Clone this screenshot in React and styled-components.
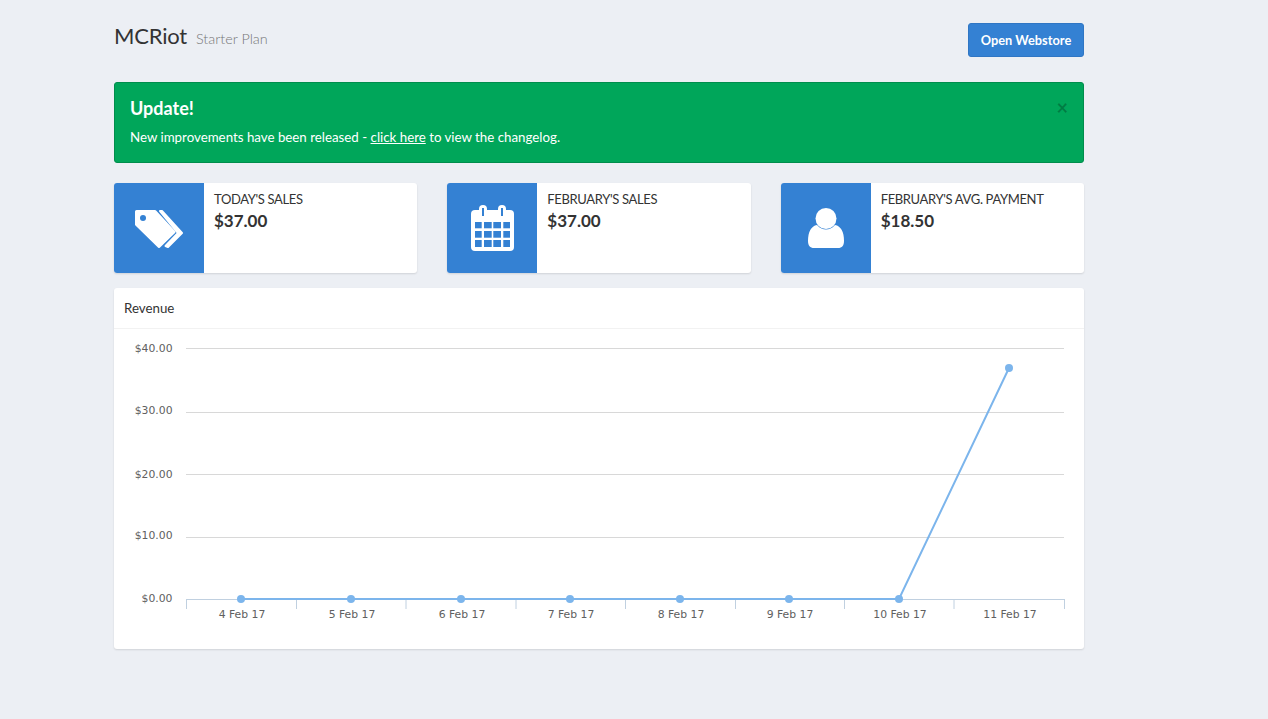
import React from 'react';
import styled, { createGlobalStyle } from 'styled-components';

const GlobalStyle = createGlobalStyle`
  html, body { margin: 0; padding: 0; background: #ECEFF4; }
  body { font-family: "Lato", "Liberation Sans", sans-serif; color: #333; }
`;

const Page = styled.div`
  width: 970px;
  min-height: 719px;
  margin-left: 114px;
  padding-top: 23px;
  box-sizing: border-box;
`;

const Header = styled.header`
  display: flex;
  justify-content: space-between;
  align-items: flex-start;
  height: 34px;
  margin-bottom: 25px;
`;

const Title = styled.h1`
  margin: 0;
  font-size: 22px;
  line-height: 26px;
  font-weight: 400;
  letter-spacing: -0.2px;
  color: #333;
`;

const Plan = styled.small`
  margin-left: 9px;
  font-size: 14.4px;
  font-weight: 300;
  letter-spacing: 0;
  color: #777;
`;

const StoreButton = styled.a`
  display: flex;
  align-items: center;
  justify-content: center;
  width: 116px;
  height: 34px;
  box-sizing: border-box;
  border: 1px solid #2F76C4;
  border-radius: 3px;
  background: #3481D3;
  color: #fff;
  font-size: 12.8px;
  font-weight: 700;
`;

const Alert = styled.div`
  position: relative;
  height: 81px;
  box-sizing: border-box;
  padding: 14px 15px;
  margin-bottom: 20px;
  background: #00A65A;
  border: 1px solid #008D4C;
  border-radius: 3px;
  color: #fff;
`;

const AlertTitle = styled.h4`
  margin: 0 0 7px;
  font-size: 18px;
  line-height: 23px;
  font-weight: 700;
`;

const AlertText = styled.p`
  margin: 0;
  font-size: 13.3px;
  line-height: 20px;
  a { color: #fff; text-decoration: underline; }
`;

const Close = styled.span`
  position: absolute;
  top: 14px;
  right: 15px;
  font-size: 20px;
  line-height: 20px;
  font-weight: 700;
  color: rgba(0, 0, 0, 0.25);
`;

const Stats = styled.div`
  display: grid;
  grid-template-columns: repeat(3, 1fr);
  gap: 30px;
  margin-bottom: 15px;
`;

const StatCard = styled.div`
  display: flex;
  height: 90px;
  background: #fff;
  border-radius: 3px;
  overflow: hidden;
  box-shadow: 0 1px 2px rgba(0, 0, 0, 0.12);
`;

const StatIcon = styled.div`
  flex: 0 0 90px;
  display: flex;
  align-items: center;
  justify-content: center;
  background: #3481D3;
`;

const StatBody = styled.div`
  padding: 7px 10px;
`;

const StatLabel = styled.div`
  font-size: 13px;
  line-height: 18px;
  letter-spacing: -0.35px;
  color: #333;
`;

const StatValue = styled.div`
  margin-top: 1px;
  font-size: 17px;
  line-height: 24px;
  font-weight: 700;
  color: #333;
`;

const Panel = styled.section`
  background: #fff;
  border-radius: 3px;
  box-shadow: 0 1px 2px rgba(0, 0, 0, 0.12);
`;

const PanelHeading = styled.div`
  height: 41px;
  box-sizing: border-box;
  padding: 10px 10px;
  font-size: 13.3px;
  line-height: 20px;
  color: #333;
  border-bottom: 1px solid #F2F2F2;
`;

const ChartSvg = styled.svg`
  display: block;
  text {
    font-family: "DejaVu Sans", sans-serif;
    font-size: 10.8px;
    fill: #606060;
  }
`;

const TagsIcon = () => (
  <svg width="48" height="39" viewBox="0 0 48 39">
    <path
      fill="#fff"
      stroke="#fff"
      strokeWidth="3"
      strokeLinejoin="round"
      d="M1.5 2.500H20L39 23 24 37.500 1.500 15.500Z"
    />
    <circle cx="8" cy="9" r="3" fill="#3481D3" />
    <path
      fill="#fff"
      stroke="#fff"
      strokeWidth="2"
      strokeLinejoin="round"
      d="M25 2H27L47 24 33 38 30.500 37 43 24Z"
    />
  </svg>
);

const calCols = [[4, 6.7], [13, 7.7], [22.3, 7.7], [32.3, 6.7]];
const calRows = [[17, 6.3], [26, 6.7], [35, 7]];

const CalendarIcon = () => (
  <svg width="43" height="46" viewBox="0 0 43 46">
    <rect x="0" y="5" width="43" height="41" rx="4" fill="#fff" />
    <rect x="8" y="0" width="8" height="13" rx="4" fill="#fff" />
    <rect x="27" y="0" width="8" height="13" rx="4" fill="#fff" />
    <rect x="11" y="3" width="2" height="8" fill="#3481D3" />
    <rect x="30" y="3" width="2" height="8" fill="#3481D3" />
    {calRows.map(([y, h]) =>
      calCols.map(([x, w]) => (
        <rect key={`${x}-${y}`} x={x} y={y} width={w} height={h} fill="#3481D3" />
      ))
    )}
  </svg>
);

const UserIcon = () => (
  <svg width="36" height="40" viewBox="0 0 36 40">
    <path
      fill="#fff"
      d="M0 33C0 24 3 18 9 17C12 20.500 15 21.500 18 21.500C21 21.500 24 20.500 27 17C33 18 36 24 36 33C36 37.500 34 40 30 40H6C2 40 0 37.500 0 33Z"
    />
    <circle cx="18" cy="10.500" r="10.500" fill="#fff" />
  </svg>
);

const stats = [
  { label: "TODAY'S SALES", value: '$37.00', icon: <TagsIcon /> },
  { label: "FEBRUARY'S SALES", value: '$37.00', icon: <CalendarIcon /> },
  { label: "FEBRUARY'S AVG. PAYMENT", value: '$18.50', icon: <UserIcon /> },
];

// chart coords are relative to the panel, below the heading
const yLabels = [
  { text: '$40.00', y: 19.5, textY: 23 },
  { text: '$30.00', y: 83.5, textY: 85 },
  { text: '$20.00', y: 145.5, textY: 148.5 },
  { text: '$10.00', y: 208.5, textY: 210 },
];
const ticks = [72, 182, 291.5, 401.5, 511, 621, 730, 839.5, 950];
const points = [
  { x: 127, y: 270, label: '4 Feb 17' },
  { x: 237, y: 270, label: '5 Feb 17' },
  { x: 347, y: 270, label: '6 Feb 17' },
  { x: 456, y: 270, label: '7 Feb 17' },
  { x: 566, y: 270, label: '8 Feb 17' },
  { x: 675, y: 270, label: '9 Feb 17' },
  { x: 785, y: 270, label: '10 Feb 17' },
  { x: 895, y: 39, label: '11 Feb 17' },
];

const RevenueChart = () => (
  <ChartSvg width="970" height="320" viewBox="0 0 970 320">
    {yLabels.map((l) => (
      <g key={l.text}>
        <line x1="72" x2="950" y1={l.y} y2={l.y} stroke="#D8D8D8" />
        <text x="58.500" y={l.textY} textAnchor="end">{l.text}</text>
      </g>
    ))}
    <text x="58.500" y="273" textAnchor="end">$0.00</text>
    <line x1="72" x2="950" y1="270.500" y2="270.500" stroke="#C0D0E0" />
    {ticks.map((x) => (
      <line key={x} x1={x + 0.5} x2={x + 0.5} y1="270" y2="280" stroke="#C0D0E0" />
    ))}
    <polyline
      fill="none"
      stroke="#7CB5EC"
      strokeWidth="2"
      points={points.map((p) => `${p.x},${p.y}`).join(' ')}
    />
    {points.map((p) => (
      <g key={p.label}>
        <circle cx={p.x} cy={p.y} r="4" fill="#7CB5EC" />
        <text x={p.x + 1} y="289" textAnchor="middle">{p.label}</text>
      </g>
    ))}
  </ChartSvg>
);

export default function App() {
  return (
    <Page>
      <GlobalStyle />
      <Header>
        <Title>
          MCRiot<Plan>Starter Plan</Plan>
        </Title>
        <StoreButton>Open Webstore</StoreButton>
      </Header>
      <Alert>
        <Close>×</Close>
        <AlertTitle>Update!</AlertTitle>
        <AlertText>
          New improvements have been released - <a href="#changelog">click here</a> to view the changelog.
        </AlertText>
      </Alert>
      <Stats>
        {stats.map((s) => (
          <StatCard key={s.label}>
            <StatIcon>{s.icon}</StatIcon>
            <StatBody>
              <StatLabel>{s.label}</StatLabel>
              <StatValue>{s.value}</StatValue>
            </StatBody>
          </StatCard>
        ))}
      </Stats>
      <Panel>
        <PanelHeading>Revenue</PanelHeading>
        <RevenueChart />
      </Panel>
    </Page>
  );
}
